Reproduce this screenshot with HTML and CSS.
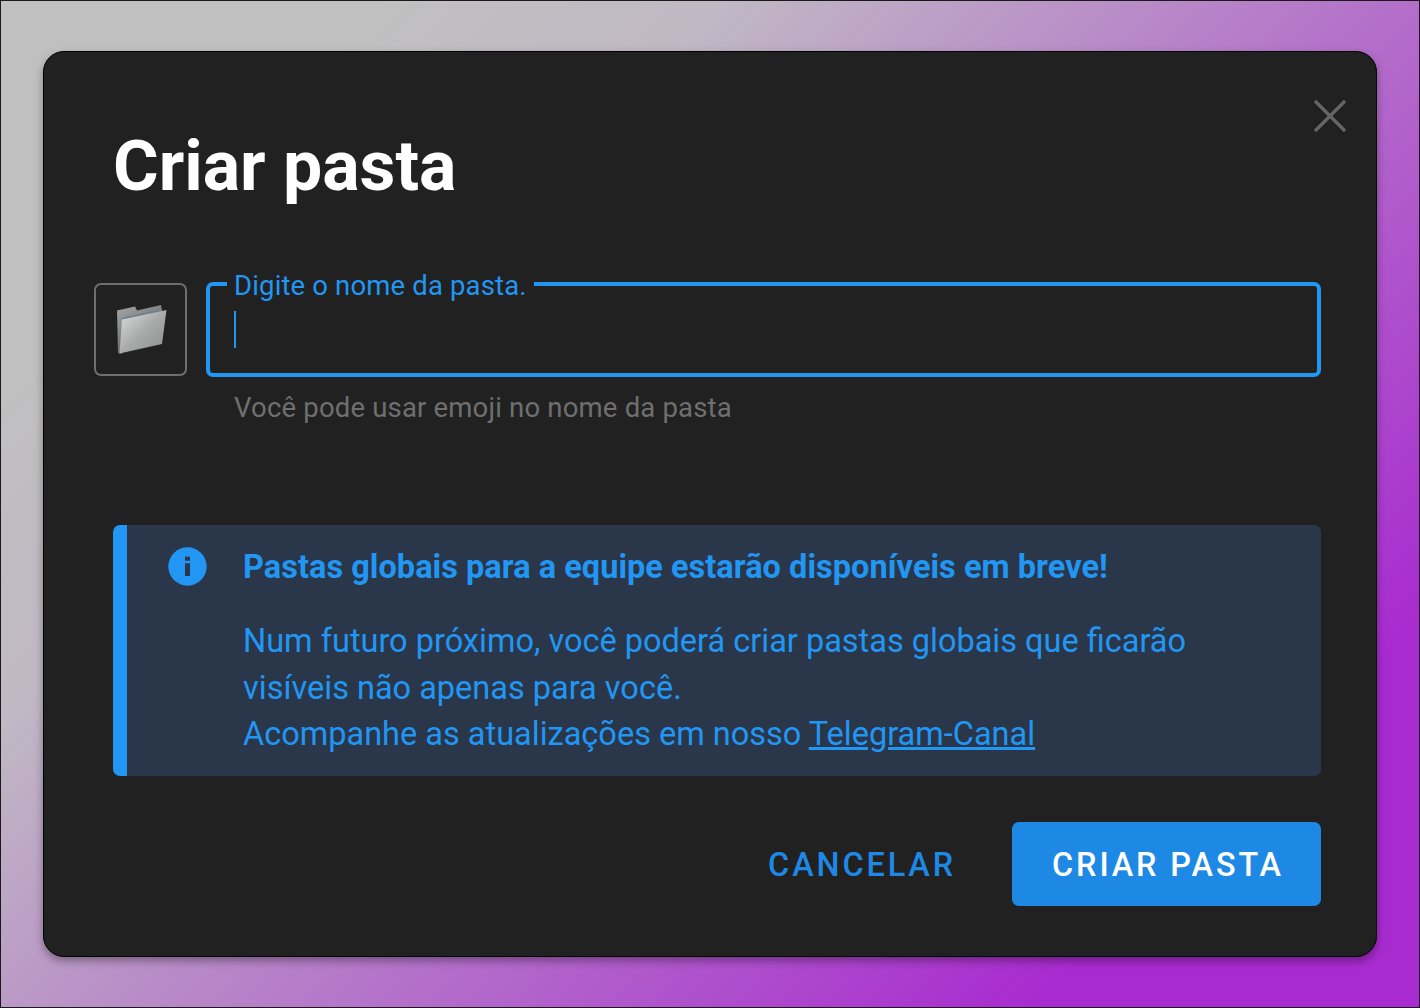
FILE: index.html
```html
<!DOCTYPE html>
<html lang="pt">
<head>
<meta charset="utf-8">
<title>Criar pasta</title>
<link rel="stylesheet" href="styles.css">
</head>
<body>
<div class="backdrop">
  <section class="dialog">
    <button class="close" aria-label="Fechar">
      <svg width="34" height="34" viewBox="0 0 34 34"><path d="M2 2 L32 32 M32 2 L2 32" stroke="#666" stroke-width="3.2" fill="none"/></svg>
    </button>
    <h1 class="title">Criar pasta</h1>
    <div class="field-row">
      <button class="emoji" aria-label="Ícone">
        <svg width="50" height="49" viewBox="0 0 50 49">
          <defs>
            <linearGradient id="front" x1="0.1" y1="0.1" x2="0.9" y2="0.9"><stop offset="0" stop-color="#d4d4d4"/><stop offset="0.5" stop-color="#a9aaaa"/><stop offset="1" stop-color="#919494"/></linearGradient>
            <linearGradient id="back" x1="0" y1="0" x2="0.6" y2="1"><stop offset="0" stop-color="#a8a8a8"/><stop offset="1" stop-color="#55585a"/></linearGradient>
          </defs>
          <path d="M0 5.500 L18 1.500 L20 5.500 L44 0 L45 5 L46 8 L4 49 L1 48 Z" fill="url(#back)"/>
          <path d="M4 13 L44 4.500 L45 6.500 L5 15 Z" fill="#6a7f8f"/>
          <path d="M5 14.500 L49.500 5 L45 39 L2.500 48.500 Z" fill="url(#front)"/>
        </svg>
      </button>
      <div class="field">
        <label class="field-label">Digite o nome da pasta.</label>
        <div class="input"><span class="caret"></span></div>
        <p class="hint">Você pode usar emoji no nome da pasta</p>
      </div>
    </div>
    <aside class="notice">
      <svg class="notice-icon" width="39" height="39" viewBox="0 0 39 39"><circle cx="19.500" cy="19.500" r="19.200" fill="#2196f3"/><rect x="17" y="16.300" width="5" height="12.700" fill="#2a374a"/><rect x="17" y="9.700" width="5" height="4" fill="#2a374a"/></svg>
      <div class="notice-body">
        <h2 class="notice-title">Pastas globais para a equipe estarão disponíveis em breve!</h2>
        <p class="notice-text">Num futuro próximo, você poderá criar pastas globais que ficarão<br>visíveis não apenas para você.<br>Acompanhe as atualizações em nosso <a href="#" class="notice-link">Telegram-Canal</a></p>
      </div>
    </aside>
    <div class="actions">
      <button class="btn btn-text">CANCELAR</button>
      <button class="btn btn-primary">CRIAR PASTA</button>
    </div>
  </section>
</div>
</body>
</html>
```

FILE: styles.css
```css
* { box-sizing: border-box; }
html, body { margin: 0; height: 100%; }
body { font-family: Roboto, "Liberation Sans", sans-serif; }
.backdrop {
  height: 1008px;
  border: 1px solid #1a1a1a;
  background: linear-gradient(135deg, #c0c0c0 16%, #c0b8c4 30%, #a82bcf 84%);
  padding: 50px 42px 50px 42px;
}
.dialog {
  position: relative;
  height: 906px;
  background: #212121;
  border: 1px solid #000;
  border-radius: 21px;
  box-shadow: 0 4px 8px rgba(0,0,0,.35);
  padding: 0 55px 0 69px;
}
.close {
  position: absolute;
  top: 47px;
  right: 29px;
  padding: 0;
  width: 34px;
  height: 34px;
  background: none;
  border: 0;
  display: block;
}
.close svg { display: block; }
.title {
  margin: 0;
  padding-top: 73px;
  font-size: 69.800px;
  line-height: 82px;
  font-weight: 700;
  color: #fff;
}
.field-row {
  display: flex;
  align-items: flex-start;
  gap: 19px;
  margin: 76px 0 0 -19px;
}
.emoji {
  flex: none;
  width: 93px;
  height: 93px;
  background: none;
  border: 2px solid #6e6e6e;
  border-radius: 7px;
  display: flex;
  align-items: center;
  justify-content: center;
  padding: 0 0 0 3px;
}
.field { position: relative; flex: 1; }
.field-label {
  position: absolute;
  left: 21px;
  top: -13px;
  padding: 0 7px;
  background: #212121;
  color: #2196f3;
  font-size: 27.500px;
  line-height: 32px;
  letter-spacing: .15px;
}
.input {
  height: 95px;
  margin-top: -1px;
  border: 4px solid #2196f3;
  border-radius: 7px;
  padding: 25px 24px;
}
.caret { display: block; width: 2px; height: 37px; background: #2196f3; }
.hint {
  margin: 15px 0 0 28px;
  font-size: 27.500px;
  line-height: 32px;
  letter-spacing: .18px;
  color: #6f6f6f;
}
.notice {
  display: flex;
  margin-top: 101px;
  height: 251px;
  background: #2a374a;
  border-left: 14px solid #2196f3;
  border-radius: 7px;
  padding: 22px 0 0 41px;
  gap: 36px;
}
.notice-icon { flex: none; }
.notice-title {
  margin: 0;
  font-size: 32.500px;
  line-height: 40px;
  font-weight: 700;
  letter-spacing: .03px;
  color: #2196f3;
}
.notice-text {
  margin: 31px 0 0;
  font-size: 32.500px;
  line-height: 46.500px;
  color: #2196f3;
}
.notice-link { color: inherit; text-decoration: underline; }
.actions {
  display: flex;
  justify-content: flex-end;
  align-items: center;
  gap: 56px;
  margin-top: 46px;
}
.btn {
  font-family: inherit;
  font-size: 32.400px;
  font-weight: 500;
  letter-spacing: 2.900px;
  border: 0;
  padding: 2px 0 0 3px;
}
.btn-text { background: none; color: #1e88e5; }
.btn-primary {
  width: 309px;
  height: 84px;
  background: #1e88e5;
  color: #fff;
  border-radius: 7px;
}
```
